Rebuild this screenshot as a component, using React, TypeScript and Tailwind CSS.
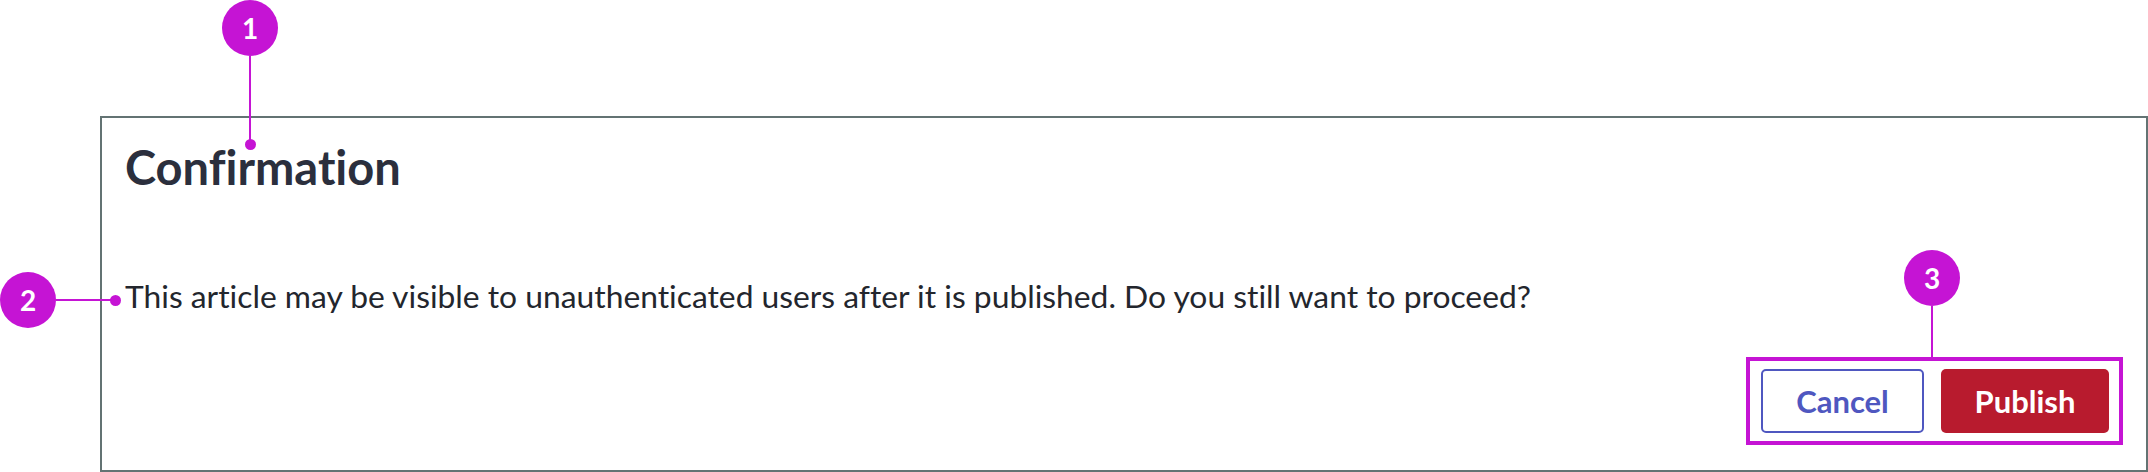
import React from 'react';

const MAGENTA = 'bg-[#c514d4]';

// numbered callout bubble used by the annotation layer
const Marker: React.FC<{ n: number; className: string }> = ({ n, className }) => (
  <div
    className={`absolute w-[56px] h-[56px] rounded-full ${MAGENTA} text-white flex items-center justify-center text-[28px] font-bold leading-none ${className}`}
  >
    {n}
  </div>
);

const Dot: React.FC<{ className: string }> = ({ className }) => (
  <div className={`absolute w-[11px] h-[11px] rounded-full ${MAGENTA} ${className}`} />
);

const Annotations: React.FC = () => (
  <div className="pointer-events-none absolute inset-0">
    {/* 1: title */}
    <Marker n={1} className="left-[222px] top-0" />
    <div className={`absolute left-[249px] top-[56px] w-[2px] h-[88px] ${MAGENTA}`} />
    <Dot className="left-[244.5px] top-[138.5px]" />

    {/* 2: message */}
    <Marker n={2} className="left-0 top-[272px]" />
    <div className={`absolute left-[56px] top-[299px] w-[59px] h-[2px] ${MAGENTA}`} />
    <Dot className="left-[109.5px] top-[294.5px]" />

    {/* 3: actions */}
    <Marker n={3} className="left-[1904px] top-[250px]" />
    <div className={`absolute left-[1931px] top-[306px] w-[2px] h-[51px] ${MAGENTA}`} />
    <div className="absolute left-[1746px] top-[357px] w-[377px] h-[88px] border-4 border-[#c514d4]" />
  </div>
);

const ConfirmDialog: React.FC = () => (
  <div className="ml-[100px] mt-[116px] w-[2048px] h-[356px] border-2 border-[#637373] bg-white flex flex-col pl-[23px] pr-[37px] pt-[26px] pb-[37px] [font-variant-ligatures:none]">
    <h2 className="text-[47px] font-bold leading-none text-[#2b2f3d]">Confirmation</h2>
    <p className="mt-[90px] text-[31.8px] leading-none text-[#23262d]">
      This article may be visible to unauthenticated users after it is published. Do you still want to proceed?
    </p>
    <div className="mt-auto flex justify-end gap-[17px]">
      <button className="w-[163px] h-[64px] rounded-[5px] border-2 border-[#4f57c0] bg-white text-[#4f57c0] text-[31px] font-bold leading-none">
        Cancel
      </button>
      <button className="w-[168px] h-[64px] rounded-[5px] bg-[#b81b2e] text-white text-[31px] font-bold leading-none">
        Publish
      </button>
    </div>
  </div>
);

const App: React.FC = () => {
  return (
    <div className="relative w-[2148px] h-[472px] bg-white overflow-hidden font-['Lato',sans-serif]">
      <ConfirmDialog />
      <Annotations />
    </div>
  );
};

export default App;
